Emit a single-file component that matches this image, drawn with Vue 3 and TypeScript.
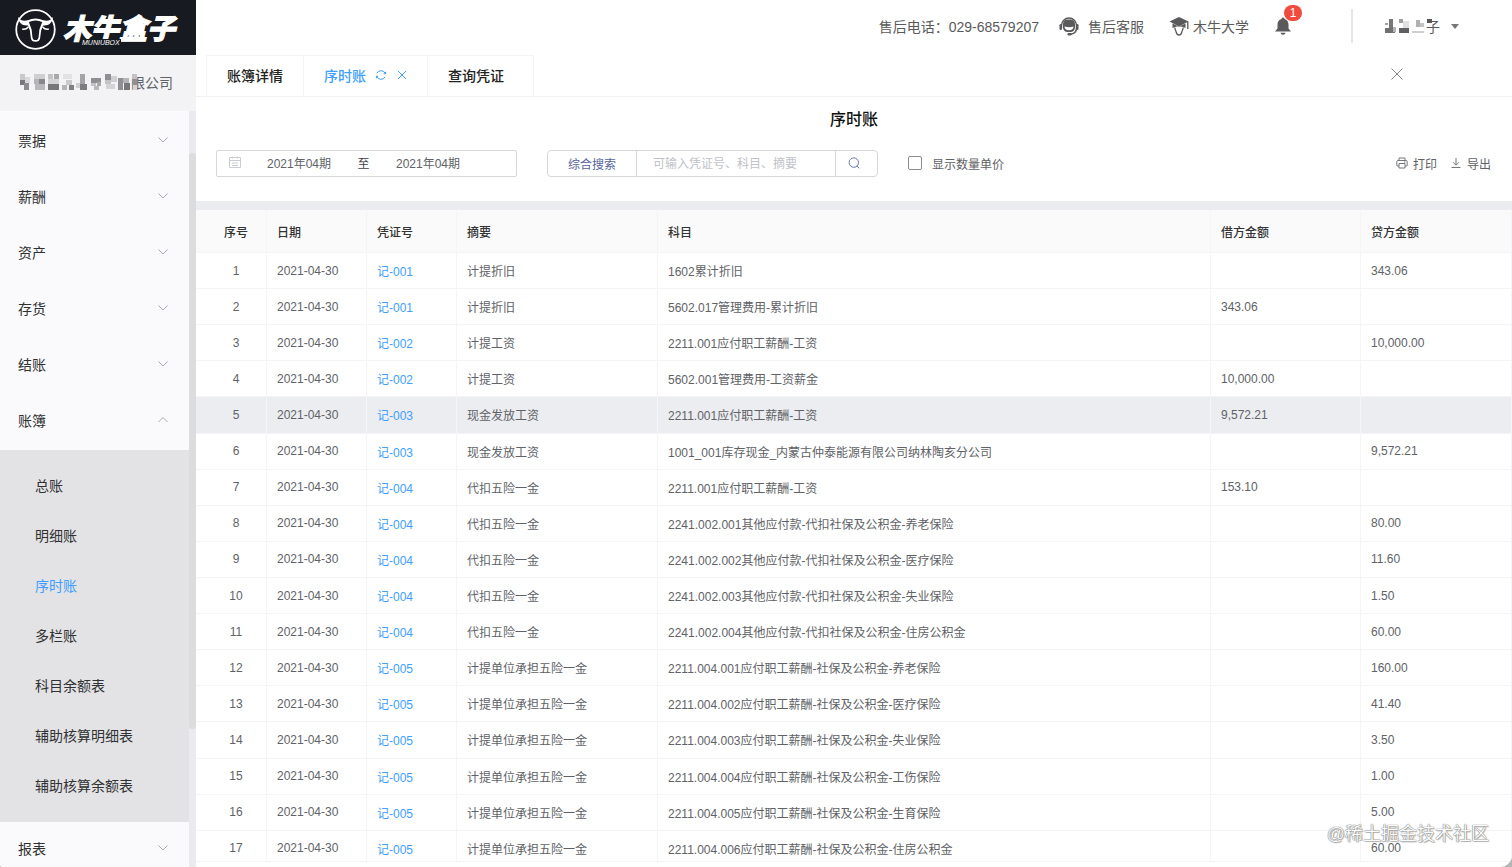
<script setup lang="ts">
import { ref } from 'vue'

interface Entry {
  date: string
  voucher: string
  summary: string
  subject: string
  debit: string
  credit: string
}

const row = (voucher: string, summary: string, subject: string, debit: string, credit: string): Entry => ({
  date: '2021-04-30',
  voucher,
  summary,
  subject,
  debit,
  credit,
})

const entries: Entry[] = [
  row('记-001', '计提折旧', '1602累计折旧', '', '343.06'),
  row('记-001', '计提折旧', '5602.017管理费用-累计折旧', '343.06', ''),
  row('记-002', '计提工资', '2211.001应付职工薪酬-工资', '', '10,000.00'),
  row('记-002', '计提工资', '5602.001管理费用-工资薪金', '10,000.00', ''),
  row('记-003', '现金发放工资', '2211.001应付职工薪酬-工资', '9,572.21', ''),
  row('记-003', '现金发放工资', '1001_001库存现金_内蒙古仲泰能源有限公司纳林陶亥分公司', '', '9,572.21'),
  row('记-004', '代扣五险一金', '2211.001应付职工薪酬-工资', '153.10', ''),
  row('记-004', '代扣五险一金', '2241.002.001其他应付款-代扣社保及公积金-养老保险', '', '80.00'),
  row('记-004', '代扣五险一金', '2241.002.002其他应付款-代扣社保及公积金-医疗保险', '', '11.60'),
  row('记-004', '代扣五险一金', '2241.002.003其他应付款-代扣社保及公积金-失业保险', '', '1.50'),
  row('记-004', '代扣五险一金', '2241.002.004其他应付款-代扣社保及公积金-住房公积金', '', '60.00'),
  row('记-005', '计提单位承担五险一金', '2211.004.001应付职工薪酬-社保及公积金-养老保险', '', '160.00'),
  row('记-005', '计提单位承担五险一金', '2211.004.002应付职工薪酬-社保及公积金-医疗保险', '', '41.40'),
  row('记-005', '计提单位承担五险一金', '2211.004.003应付职工薪酬-社保及公积金-失业保险', '', '3.50'),
  row('记-005', '计提单位承担五险一金', '2211.004.004应付职工薪酬-社保及公积金-工伤保险', '', '1.00'),
  row('记-005', '计提单位承担五险一金', '2211.004.005应付职工薪酬-社保及公积金-生育保险', '', '5.00'),
  row('记-005', '计提单位承担五险一金', '2211.004.006应付职工薪酬-社保及公积金-住房公积金', '', '60.00'),
]

const menuTop = ['票据', '薪酬', '资产', '存货', '结账']
const subMenu = ['总账', '明细账', '序时账', '多栏账', '科目余额表', '辅助核算明细表', '辅助核算余额表']
const activeSub = '序时账'
const activeRow = ref(4)
const periodFrom = ref('2021年04期')
const periodTo = ref('2021年04期')
const keyword = ref('')
const showQty = ref(false)

// Blocks of the masked company name: x, y, width, height, colour
const companyMask: [number, number, number, number, string][] = [
  [0, 0, 5, 6, '#c9c9cc'], [0, 6, 5, 5, '#77777a'], [4, 9, 5, 7, '#8c8c90'], [5, 3, 5, 6, '#dadadc'],
  [14, 0, 11, 5, '#cfcfd2'], [14, 5, 5, 5, '#b4b4b7'], [19, 5, 6, 5, '#88888c'], [15, 10, 10, 6, '#b9b9bc'],
  [28, 0, 5, 5, '#c3c3c6'], [34, 0, 5, 5, '#a8a8ab'], [28, 5, 11, 5, '#d4d4d7'], [28, 10, 11, 6, '#77777a'],
  [43, 0, 9, 5, '#e2e2e4'], [46, 6, 6, 5, '#c9c9cc'], [42, 11, 5, 5, '#b4b4b7'], [49, 11, 5, 5, '#808084'],
  [56, 9, 5, 5, '#cfcfd2'], [60, 0, 5, 10, '#a4a4a7'], [60, 10, 7, 6, '#7d7d80'],
  [71, 4, 10, 5, '#909094'], [71, 9, 5, 3, '#c3c3c6'], [77, 8, 4, 4, '#a8a8ab'], [74, 12, 5, 4, '#b9b9bc'],
  [85, 0, 6, 6, '#909094'], [85, 6, 6, 4, '#c3c3c6'], [91, 2, 6, 6, '#cfcfd2'], [86, 10, 9, 5, '#d4d4d7'],
  [98, 4, 5, 12, '#909094'], [103, 4, 6, 5, '#b4b4b7'], [104, 9, 6, 7, '#77777a'],
  [112, 0, 5, 5, '#c3c3c6'], [112, 5, 5, 6, '#909094'], [113, 11, 4, 5, '#d4d4d7'],
]

const userMask: [number, number, number, number, string][] = [
  [1, 4, 3, 2, '#a0a0a3'], [5, 0, 4, 12, '#77777a'], [1, 9, 10, 5, '#707073'], [9, 8, 3, 5, '#b4b4b7'],
  [15, 0, 4, 4, '#a0a0a3'], [19, 2, 6, 7, '#e0e0e2'], [15, 9, 10, 5, '#606063'],
  [32, 1, 4, 7, '#b0b0b3'], [36, 4, 4, 4, '#c3c3c6'], [28, 12, 12, 2, '#cfcfd2'],
  [43, 0, 5, 4, '#58585b'],
]
</script>

<template>
  <div class="app">
    <aside class="side">
      <a class="logo" href="#" aria-label="木牛盒子">
        <svg class="bull" viewBox="0 0 40 40" aria-hidden="true">
          <circle cx="20" cy="20" r="18.800" fill="none" stroke="#fff" stroke-width="1.700" />
          <path
            d="M3 7.500C4.500 11 8 12 12.500 11Q20 7.500 27.500 11C32 12 35.500 11 37 7.500C37 13 33 16.500 27.500 16L25.500 21L24.500 28.500Q24 32 20 32Q16 32 15.500 28.500L14.500 21L12.500 16C7 16.500 3 13 3 7.500Z"
            fill="#fff" />
          <path d="M13.500 12.800Q20 9.500 26.500 12.800L23.800 20L23 27.500Q22.500 30.300 20 30.300Q17.500 30.300 17 27.500L16.200 20Z" fill="#171a21" />
          <path d="M7 19.500Q10.500 20.500 13 17.500M33 19.500Q29.500 20.500 27 17.500" fill="none" stroke="#fff" stroke-width="1.500" />
        </svg>
        <span class="brand">木牛盒子<small>MUNIUBOX</small></span>
      </a>
      <div class="company">
        <svg class="company-mask" viewBox="0 0 117 16" aria-hidden="true">
          <rect v-for="(b, i) in companyMask" :key="i" :x="b[0]" :y="b[1]" :width="b[2]" :height="b[3]" :fill="b[4]" />
        </svg>
        <span>限公司</span>
      </div>
      <div class="scroller">
        <nav class="menu">
          <button v-for="m in menuTop" :key="m" class="menu-item" type="button">
            {{ m }}
            <svg viewBox="0 0 12 12" aria-hidden="true"><path d="M1.500 3.500L6 8L10.500 3.500" /></svg>
          </button>
          <button class="menu-item" type="button" aria-expanded="true">
            账簿
            <svg viewBox="0 0 12 12" aria-hidden="true"><path d="M1.500 8L6 3.500L10.500 8" /></svg>
          </button>
          <div class="submenu">
            <a v-for="s in subMenu" :key="s" href="#" :class="{ active: s === activeSub }">{{ s }}</a>
          </div>
          <button class="menu-item" type="button">
            报表
            <svg viewBox="0 0 12 12" aria-hidden="true"><path d="M1.500 3.500L6 8L10.500 3.500" /></svg>
          </button>
        </nav>
        <div class="track"><div class="thumb"></div></div>
      </div>
    </aside>

    <main class="main">
      <header class="top">
        <span class="phone">售后电话：029-68579207</span>
        <a class="service" href="#">
          <svg viewBox="0 0 20 20" aria-hidden="true">
            <path d="M2.500 12V9.500a7.500 7.500 0 0 1 15 0V12c0 4-3 6-6.500 6.200" fill="none" stroke="#5a5a5c" stroke-width="1.500" />
            <rect x="0.500" y="8" width="2.500" height="6" rx="1.200" fill="#5a5a5c" />
            <rect x="17" y="8" width="2.500" height="6" rx="1.200" fill="#5a5a5c" />
            <rect x="4" y="3.500" width="12" height="12.500" rx="4.500" fill="#5a5a5c" />
            <path d="M5.500 10.500Q10 12 14.500 10.500Q14.500 14.200 10 14.200Q5.500 14.200 5.500 10.500Z" fill="#fff" />
            <rect x="8.500" y="17" width="4" height="2.400" rx="1.200" fill="#5a5a5c" />
          </svg>
          售后客服
        </a>
        <a class="school" href="#">
          <svg viewBox="0 0 20 20" aria-hidden="true">
            <path d="M0.500 5.500L10 1L19.500 5.500L10 10.500Z" fill="#5a5a5c" />
            <path d="M3.500 7.500V12Q10 8.500 16.500 12V7.500L10 10.500Z" fill="#5a5a5c" />
            <path d="M18.800 5.500V13" stroke="#5a5a5c" stroke-width="1.300" />
            <path d="M5.800 11.500C6 14 7 14.500 7.300 16.500Q8 19 10 19Q12 19 12.700 16.500C13 14.500 14 14 14.200 11.500" fill="none" stroke="#5a5a5c" stroke-width="1.300" />
          </svg>
          木牛大学
        </a>
        <button class="bell" type="button" aria-label="消息">
          <svg viewBox="0 0 18 18" aria-hidden="true">
            <path d="M9 0.500a1.500 1.500 0 0 1 1.500 1.600C13 2.800 14.500 5 14.500 7.500V11.500L17 14.500H1L3.500 11.500V7.500C3.500 5 5 2.800 7.500 2.100A1.500 1.500 0 0 1 9 0.500Z" fill="#5a5a5c" />
            <path d="M6.500 15.800h5a2.500 2 0 0 1-5 0Z" fill="#5a5a5c" />
          </svg>
          <span class="badge">1</span>
        </button>
        <span class="rule"></span>
        <button class="user" type="button">
          <svg class="user-mask" viewBox="0 0 48 14" aria-hidden="true">
            <rect v-for="(b, i) in userMask" :key="i" :x="b[0]" :y="b[1]" :width="b[2]" :height="b[3]" :fill="b[4]" />
          </svg>
          <span class="user-name">子</span>
          <span class="caret"></span>
        </button>
      </header>

      <div class="tabs">
        <a class="tab" href="#">账簿详情</a>
        <div class="tab current">
          <a href="#">序时账</a>
          <button type="button" aria-label="刷新">
            <svg viewBox="0 0 12 12" aria-hidden="true">
              <path d="M2 4.200A4.500 4.500 0 0 1 10.200 4.500M10 7.800A4.500 4.500 0 0 1 1.800 7.500M10.500 2.800V4.800H8.700M1.500 9.200V7.200H3.300" />
            </svg>
          </button>
          <button type="button" aria-label="关闭标签">
            <svg viewBox="0 0 12 12" aria-hidden="true"><path d="M2 2L10 10M10 2L2 10" /></svg>
          </button>
        </div>
        <a class="tab" href="#">查询凭证</a>
        <button class="close-all" type="button" aria-label="关闭">
          <svg viewBox="0 0 14 14" aria-hidden="true"><path d="M1.500 1.500L12.500 12.500M12.500 1.500L1.500 12.500" /></svg>
        </button>
      </div>

      <h1 class="title">序时账</h1>

      <form class="filters" @submit.prevent>
        <div class="period">
          <svg viewBox="0 0 12 12" aria-hidden="true">
            <path d="M0.500 1.500H11.500V11.500H0.500ZM0.500 4.500H11.500M3.500 0.500V2.500M8.500 0.500V2.500M3 7H9M3 9.500H9" />
          </svg>
          <input v-model="periodFrom" type="text" aria-label="开始期间" />
          <span>至</span>
          <input v-model="periodTo" type="text" aria-label="结束期间" />
        </div>
        <div class="search">
          <button class="search-kind" type="button">综合搜索</button>
          <input v-model="keyword" type="text" placeholder="可输入凭证号、科目、摘要" aria-label="搜索" />
          <button class="search-go" type="submit" aria-label="查询">
            <svg viewBox="0 0 12 12" aria-hidden="true"><circle cx="5.800" cy="5.600" r="4.700" /><path d="M9 9L11.200 11.300" /></svg>
          </button>
        </div>
        <label class="qty"><input v-model="showQty" type="checkbox" />显示数量单价</label>
        <div class="actions">
          <button type="button">
            <svg viewBox="0 0 12 12" aria-hidden="true">
              <path d="M3 3.500V1H9V3.500M3 9H1.500Q0.800 9 0.800 8.200V4.500Q0.800 3.500 1.800 3.500H10.200Q11.200 3.500 11.200 4.500V8.200Q11.200 9 10.500 9H9M3 6.500H9V11H3ZM8 5H9.500" />
            </svg>
            打印
          </button>
          <button type="button">
            <svg viewBox="0 0 12 12" aria-hidden="true"><path d="M6 1V8M3 5.200L6 8.200L9 5.200M1.500 10.500H10.500" /></svg>
            导出
          </button>
        </div>
      </form>

      <div class="ledger">
        <table>
          <colgroup>
            <col class="c-no" /><col class="c-date" /><col class="c-voucher" /><col class="c-summary" />
            <col /><col class="c-debit" /><col class="c-credit" />
          </colgroup>
          <thead>
            <tr>
              <th scope="col">序号</th>
              <th scope="col">日期</th>
              <th scope="col">凭证号</th>
              <th scope="col">摘要</th>
              <th scope="col">科目</th>
              <th scope="col">借方金额</th>
              <th scope="col">贷方金额</th>
            </tr>
          </thead>
          <tbody>
            <tr v-for="(e, i) in entries" :key="i" :class="{ hover: i === activeRow }">
              <td>{{ i + 1 }}</td>
              <td>{{ e.date }}</td>
              <td><a href="#">{{ e.voucher }}</a></td>
              <td>{{ e.summary }}</td>
              <td>{{ e.subject }}</td>
              <td>{{ e.debit }}</td>
              <td>{{ e.credit }}</td>
            </tr>
          </tbody>
        </table>
      </div>
    </main>
    <div class="watermark">@稀土掘金技术社区</div>
  </div>
</template>

<style>
body {
  margin: 0;
  background: #b5b5b5;
}
</style>

<style scoped>
.app {
  position: relative;
  display: flex;
  height: 100vh;
  overflow: hidden;
  background: #fff;
  border-radius: 0 0 12px 3px;
  color: #606266;
  font-family: "Liberation Sans", "Noto Sans CJK SC", sans-serif;
  font-size: 12px;
}
.app *,
.app *::before {
  box-sizing: border-box;
}
a {
  color: inherit;
  text-decoration: none;
}
button {
  padding: 0;
  border: 0;
  background: none;
  color: inherit;
  font: inherit;
}
input {
  min-width: 0;
  padding: 0;
  border: 0;
  outline: 0;
  background: none;
  color: inherit;
  font: inherit;
}
svg {
  display: block;
  flex: none;
}

/* Sidebar */
.side {
  display: flex;
  flex: none;
  flex-direction: column;
  width: 196px;
  background: #e9ebee;
}
.logo {
  display: flex;
  flex: none;
  align-items: center;
  gap: 7px;
  height: 55px;
  padding: 4px 0 0 15px;
  background: #171a21;
  color: #fff;
}
.bull {
  width: 41px;
  height: 41px;
}
.brand {
  position: relative;
  font-size: 28px;
  font-style: italic;
  font-weight: 900;
  line-height: 40px;
  -webkit-text-stroke: 1px #fff;
}
.brand small {
  position: absolute;
  left: 18px;
  bottom: 4px;
  padding: 0 1px;
  background: #171a21;
  font-size: 7px;
  font-weight: 400;
  line-height: 7px;
  -webkit-text-stroke: 0;
}
.company {
  display: flex;
  flex: none;
  align-items: center;
  height: 56px;
  padding: 0 0 2px 20px;
  background: #f3f3f5;
  font-size: 14px;
}
.company-mask {
  z-index: 1;
  width: 117px;
  height: 16px;
  margin-right: -6px;
}
.scroller {
  display: flex;
  flex: 1;
  min-height: 0;
}
.menu {
  flex: 1;
  padding-top: 3px;
  overflow: hidden;
  background: #fafafc;
}
.menu-item {
  display: flex;
  align-items: center;
  justify-content: space-between;
  width: 100%;
  height: 56px;
  padding: 0 20px 4px 18px;
  color: #303133;
  font-size: 14px;
}
.menu-item svg {
  width: 12px;
  height: 12px;
  fill: none;
  stroke: #a9abb0;
}
.submenu {
  padding: 11px 0;
  background: #e3e3e5;
  font-size: 14px;
  color: #303133;
}
.submenu a {
  display: block;
  height: 50px;
  padding-left: 35px;
  line-height: 50px;
}
.submenu .active {
  color: #409eff;
}
.track {
  width: 7px;
  padding-top: 42px;
}
.thumb {
  height: 576px;
  border-radius: 3px;
  background: #dcdcdf;
}

/* Header */
.main {
  display: flex;
  flex: 1;
  flex-direction: column;
  min-width: 0;
}
.top {
  display: flex;
  flex: none;
  align-items: center;
  justify-content: flex-end;
  height: 55px;
  padding: 0 53px 3px 0;
  color: #5a5a5c;
  font-size: 14px;
}
.service,
.school {
  display: flex;
  align-items: center;
}
.service {
  gap: 9px;
  margin-left: 20px;
}
.school {
  gap: 4px;
  margin-left: 25px;
}
.service svg,
.school svg {
  width: 20px;
  height: 20px;
}
.bell {
  position: relative;
  margin-left: 25px;
}
.bell svg {
  width: 18px;
  height: 18px;
}
.badge {
  position: absolute;
  top: -12px;
  left: 10px;
  width: 18px;
  height: 16px;
  border-radius: 8px;
  background: #f04b3c;
  color: #fff;
  font-size: 12px;
  line-height: 16px;
}
.rule {
  width: 2px;
  height: 34px;
  margin: 0 31px 0 59px;
  background: #e6e6e6;
}
.user {
  display: flex;
  align-items: center;
}
.user-mask {
  z-index: 1;
  width: 48px;
  height: 14px;
  margin-right: -6px;
}
.caret {
  margin-left: 11px;
  border: 4px solid transparent;
  border-top: 5px solid #77777a;
  border-bottom: 0;
}

/* Tabs */
.tabs {
  display: flex;
  flex: none;
  height: 42px;
  padding-left: 10px;
  border-bottom: 1px solid #f2f2f4;
  color: #222;
  font-size: 14px;
  font-weight: 500;
}
.tab {
  display: flex;
  align-items: center;
  padding: 0 20px 2px;
  border: 1px solid #f4f4f6;
  border-width: 1px 0 0 1px;
}
.tab:nth-child(3) {
  padding-right: 29px;
  border-right-width: 1px;
}
.tab.current {
  gap: 9px;
  padding-right: 19px;
  color: #409eff;
}
.tab svg {
  width: 12px;
  height: 12px;
  fill: none;
  stroke: currentColor;
}
.close-all {
  margin: 0 108px 4px auto;
}
.close-all svg {
  width: 14px;
  height: 14px;
  fill: none;
  stroke: #85868a;
}
.title {
  flex: none;
  margin: 11px 0 17px;
  color: #111;
  font-size: 16px;
  font-weight: 500;
  line-height: 24px;
  text-align: center;
}

/* Filters */
.filters {
  display: flex;
  flex: none;
  align-items: center;
  height: 52px;
  padding: 0 21px 24px 20px;
}
.period {
  display: flex;
  align-items: center;
  width: 301px;
  height: 27px;
  padding-bottom: 2px;
  border: 1px solid #d6d7da;
  border-radius: 2px;
}
.period svg {
  width: 12px;
  height: 12px;
  margin: 0 12px 0 12px;
  fill: none;
  stroke: #c9ccd2;
}
.period input {
  width: 92px;
  text-align: center;
}
.period span {
  width: 37px;
  color: #404246;
  text-align: center;
}
.search {
  display: flex;
  width: 331px;
  height: 27px;
  margin-left: 30px;
  border: 1px solid #d6d7da;
  border-radius: 4px;
}
.search-kind {
  width: 89px;
  border-right: 1px solid #d6d7da;
  color: #56649a;
}
.search input {
  flex: 1;
  padding: 2px 0 0 16px;
}
.search input::placeholder {
  color: #c0c2c8;
  opacity: 1;
}
.search-go {
  display: flex;
  align-items: center;
  width: 42px;
  padding-left: 12px;
  border-left: 1px solid #d6d7da;
}
.search-go svg {
  width: 12px;
  height: 12px;
  fill: none;
  stroke: #6b78a6;
}
.qty {
  display: flex;
  align-items: center;
  gap: 10px;
  margin-left: 30px;
}
.qty input {
  width: 14px;
  height: 14px;
  margin: 0;
  border: 1px solid #8c8d91;
  border-radius: 2px;
  appearance: none;
}
.qty input:checked {
  background: #409eff;
}
.actions {
  display: flex;
  gap: 13px;
  margin-left: auto;
}
.actions button {
  display: flex;
  align-items: center;
  gap: 5px;
}
.actions svg {
  width: 12px;
  height: 12px;
  fill: none;
  stroke: #75777b;
}

/* Ledger */
.ledger {
  flex: 1;
  min-height: 0;
  margin-bottom: 5px;
  overflow: hidden;
  border-top: 9px solid #ebecf0;
  border-bottom: 1px solid #f4f4f6;
}
table {
  width: 100%;
  height: calc(100% + 6px);
  border-spacing: 0;
  table-layout: fixed;
}
.c-no {
  width: 71px;
}
.c-date {
  width: 100px;
}
.c-voucher {
  width: 90px;
}
.c-summary {
  width: 201px;
}
.c-debit {
  width: 150px;
}
.c-credit {
  width: 151px;
}
th,
td {
  padding: 0 0 0 10px;
  border-right: 1px solid #f5f5f7;
  border-bottom: 1px solid #f4f4f6;
  text-align: left;
  white-space: nowrap;
}
th {
  height: 43px;
  background: #fafafb;
  color: #333;
  font-weight: 500;
}
th:first-child,
td:first-child {
  text-align: center;
}
td a {
  color: #409eff;
}
.hover td {
  background: #ecedf1;
}

.watermark {
  position: absolute;
  right: 23px;
  bottom: 19px;
  color: #fafafa;
  font-size: 18px;
  line-height: 28px;
  text-shadow: 0 0 1px #666, 0 0 1px #888, 1px 1px 1px #bbb;
}
</style>
